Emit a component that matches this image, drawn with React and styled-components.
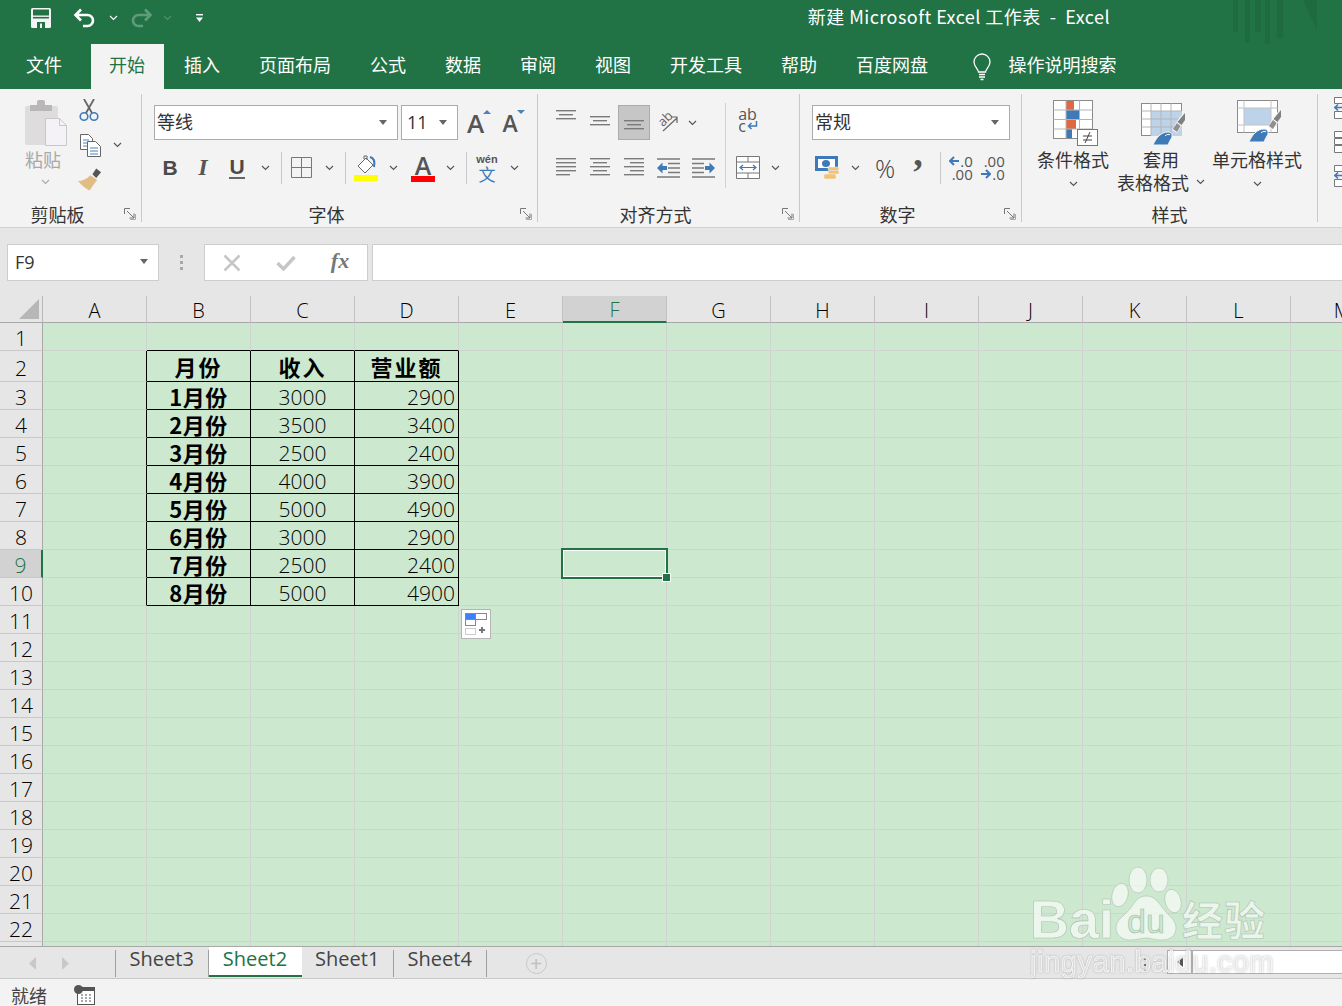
import React from "react";
import styled, { createGlobalStyle } from "styled-components";

const GREEN = "#217346";
const COLS = ["A", "B", "C", "D", "E", "F", "G", "H", "I", "J", "K", "L", "M"];
const MENU = ["开始", "插入", "页面布局", "公式", "数据", "审阅", "视图", "开发工具", "帮助", "百度网盘"];
const DATA = [
  ["1月份", 3000, 2900],
  ["2月份", 3500, 3400],
  ["3月份", 2500, 2400],
  ["4月份", 4000, 3900],
  ["5月份", 5000, 4900],
  ["6月份", 3000, 2900],
  ["7月份", 2500, 2400],
  ["8月份", 5000, 4900],
];

const Chevron = ({ color = "#555" }) => (
  <svg width="9" height="6" viewBox="0 0 9 6">
    <path d="M1 1l3.5 3.5L8 1" fill="none" stroke={color} strokeWidth="1.2" />
  </svg>
);

const ComboArrow = () => (
  <svg width="8" height="5" viewBox="0 0 8 5">
    <path d="M0 0h8L4 5z" fill="#666" />
  </svg>
);

const Launcher = () => (
  <svg width="12" height="12" viewBox="0 0 12 12">
    <path d="M.5 6V.5H6M3 3l7 7M10 5.5V10H5.5" fill="none" stroke="#777" strokeWidth="1" />
    <path d="M11.5 6v5.5H6" fill="none" stroke="#aaa" strokeWidth="1" />
  </svg>
);

// alignment glyphs are just stacks of grey lines
const Lines = ({ rows, width = 20, height = 20, gap = 4, align = "left" }) => (
  <svg width={width} height={height} viewBox={`0 0 ${width} ${height}`}>
    {rows.map((w, i) => {
      const x = align === "left" ? 0 : align === "center" ? (width - w) / 2 : width - w;
      return <rect key={i} x={x} y={i * gap} width={w} height="1.4" fill="#7a7a7a" />;
    })}
  </svg>
);

const SaveIcon = () => (
  <svg width="20" height="20" viewBox="0 0 20 20">
    <rect x="0" y="0" width="20" height="20" rx="1.5" fill="#f4f4f4" />
    <rect x="2" y="1.5" width="16" height="9" fill={GREEN} />
    <rect x="2" y="7.5" width="16" height="1.4" fill="#f4f4f4" />
    <rect x="6" y="14" width="8" height="6" fill={GREEN} />
    <rect x="9" y="15.5" width="2" height="4.5" fill="#f4f4f4" />
  </svg>
);

const ArrowBack = ({ color, flip }) => (
  <svg width="23" height="20" viewBox="0 0 23 20" style={flip ? { transform: "scaleX(-1)" } : undefined}>
    <path d="M8 1.5L2.5 7 8 12.5M3 7h11.5a5.5 5.5 0 0 1 0 11H10" fill="none" stroke={color} strokeWidth="2.6" />
  </svg>
);

const Customize = () => (
  <svg width="7" height="8" viewBox="0 0 7 8">
    <rect x="0" y="0" width="7" height="1.4" fill="#fff" />
    <path d="M0 3.5h7L3.5 8z" fill="#fff" />
  </svg>
);

const Bars = () => (
  <svg width="110" height="60" viewBox="0 0 110 60">
    <g fill="#1f6a41">
      <rect x="0" width="5" height="32" />
      <rect x="12" width="5" height="43" />
      <rect x="22" width="6" height="32" />
      <rect x="32" width="5" height="56" />
      <rect x="44" width="6" height="38" />
      <path d="M70 0h14v30zM100 44c2 4 5 8 10 10v-10z" />
    </g>
  </svg>
);

const Bulb = () => (
  <svg width="20" height="28" viewBox="0 0 20 28">
    <path d="M6.5 19c0-3-4.5-5-4.5-10a8 8 0 0 1 16 0c0 5-4.5 7-4.5 10z" fill="none" stroke="#fff" strokeWidth="1.3" />
    <path d="M7 21.5h6M7 24h6" stroke="#fff" strokeWidth="1.5" />
    <path d="M8.5 26.5h3" stroke="#fff" strokeWidth="1.5" />
  </svg>
);

const PasteIcon = () => (
  <svg width="43" height="50" viewBox="0 0 43 50">
    <rect x="1" y="6" width="33" height="39" rx="2" fill="#dedcdd" />
    <rect x="6" y="5" width="22" height="6" fill="#b9b7b8" />
    <rect x="13" y="0" width="8" height="7" rx="2" fill="#b9b7b8" />
    <path d="M21.5 18.5h14l7 7v20h-21z" fill="#f4f2f6" stroke="#c9c7c9" />
    <path d="M35.5 18.5v7h7" fill="none" stroke="#c9c7c9" />
  </svg>
);

const CutIcon = () => (
  <svg width="20" height="23" viewBox="0 0 20 23">
    <path d="M5 0l8 14M15 0L7 14" stroke="#666" strokeWidth="1.8" fill="none" />
    <circle cx="5" cy="17.5" r="3.8" fill="none" stroke="#3f7ab8" strokeWidth="1.6" />
    <circle cx="15" cy="17.5" r="3.8" fill="none" stroke="#3f7ab8" strokeWidth="1.6" />
  </svg>
);

const CopyIcon = () => (
  <svg width="21" height="23" viewBox="0 0 21 23">
    <path d="M.5.5h8l4 4v11H.5z" fill="#fff" stroke="#666" />
    <path d="M3 6h6M3 9h7M3 12h7" stroke="#4a82bd" />
    <path d="M7.5 7.5h8l5 5v10h-13z" fill="#fff" stroke="#666" />
    <path d="M10 14h8M10 17h8M10 20h8" stroke="#4a82bd" />
  </svg>
);

const PainterIcon = () => (
  <svg width="25" height="23" viewBox="0 0 25 23">
    <path d="M15 6l4-6 5 4-5 6z" fill="#555" />
    <path d="M13 7l7 5-3 4-5 7C8 21 3 17 0 13c5 0 9-2 13-6z" fill="#e2bd83" />
  </svg>
);

const SizeA = ({ size, up }) => (
  <SizeLetter $size={size}>
    A
    <SizeCaret $up={up} />
  </SizeLetter>
);

const BorderIcon = () => (
  <svg width="21" height="21" viewBox="0 0 21 21">
    <path d="M.5.5h20v20H.5zM10.5.5v20M.5 10.5h20" fill="none" stroke="#777" />
  </svg>
);

const FillIcon = () => (
  <svg width="25" height="26" viewBox="0 0 25 26">
    <path d="M4 11l8-8 7 7-8 8z" fill="#fff" stroke="#666" />
    <path d="M10 4V1h3v4" fill="none" stroke="#666" />
    <path d="M16 2c4 1 5 5 4 10" fill="none" stroke="#3f7ab8" strokeWidth="2" />
    <rect x="0" y="20" width="24" height="6" fill="#ffff00" />
  </svg>
);

const OrientIcon = () => (
  <svg width="21" height="21" viewBox="0 0 21 21" overflow="visible">
    <text x="1" y="12" fontSize="13" fontFamily="Open Sans" fill="#666" transform="rotate(-45 7 9)">ab</text>
    <path d="M5 19L19 6M13 5h6v6" fill="none" stroke="#666" strokeWidth="1.2" />
  </svg>
);

const WrapIcon = () => (
  <svg width="11" height="10" viewBox="0 0 11 10">
    <path d="M9.5 0v5H2M4.5 2L1.5 5l3 3" fill="none" stroke="#3f7ab8" strokeWidth="1.5" />
  </svg>
);

const IndentIcon = ({ flip }) => (
  <svg width="23" height="20" viewBox="0 0 23 20" style={flip ? { transform: "scaleX(-1)" } : undefined}>
    <path d="M0 1h23M11 5.5h12M11 10h12M11 14.5h12M0 19h23" stroke="#7a7a7a" strokeWidth="1.3" />
    <path d="M0 10l5.5-5.5v3.5H10v4H5.500v3.500z" fill="#3f7ab8" />
  </svg>
);

const MergeIcon = () => (
  <svg width="24" height="23" viewBox="0 0 24 23">
    <path d="M.5.5h23v22H.5zM.5 6h23M.5 17h23M12 .5V6M12 17v5.500" fill="#fff" stroke="#777" />
    <path d="M4 11.500h16M7 9L4 11.500 7 14M17 9l3 2.500-3 2.500" fill="none" stroke="#3f7ab8" strokeWidth="1.2" />
  </svg>
);

const CurrencyIcon = () => (
  <svg width="25" height="25" viewBox="0 0 25 25">
    <rect x="0" y="1" width="23" height="15" fill="#3f7ab8" />
    <rect x="3" y="4" width="17" height="9" fill="#fff" />
    <ellipse cx="11" cy="8.500" rx="4" ry="3.500" fill="#3f7ab8" />
    <rect x="13" y="12" width="11" height="3.500" rx="1.500" fill="#f2c27a" stroke="#f3f3f3" strokeWidth=".5" />
    <rect x="13" y="15.500" width="11" height="3.500" rx="1.500" fill="#f2c27a" stroke="#f3f3f3" strokeWidth=".5" />
    <rect x="9" y="19" width="12" height="5" rx="1.500" fill="#f2c27a" stroke="#f3f3f3" strokeWidth=".5" />
  </svg>
);

const BlueArrow = ({ left }) => (
  <svg width="10" height="10" viewBox="0 0 10 10">
    <path d={left ? "M5 1L1 5l4 4M1 5h9" : "M5 1l4 4-4 4M9 5H0"} fill="none" stroke="#3f7ab8" strokeWidth="2" />
  </svg>
);

const CondIcon = () => (
  <svg width="46" height="46" viewBox="0 0 46 46">
    <rect x=".5" y=".5" width="39" height="38" fill="#fff" stroke="#8a8a8a" />
    <rect x="13" y="1" width="8" height="9" fill="#e0673f" />
    <rect x="13" y="10" width="13" height="9" fill="#3f7ab8" />
    <rect x="13" y="19" width="10" height="10" fill="#e0673f" />
    <rect x="13" y="29" width="6" height="9" fill="#3f7ab8" />
    <path d="M13 .5v38M26.500.5v38M.5 10h39M.5 19.500h39M.5 29h39" fill="none" stroke="#b5b5b5" />
    <rect x="24.500" y="29.500" width="20" height="16" fill="#fff" stroke="#777" />
    <path d="M30 36h9M30 40h9M37 32l-5 11" stroke="#444" fill="none" />
  </svg>
);

// paint brush laid over the two style icons
const Brush = () => (
  <g>
    <path d="M44 9v9L36 30l-5-3 7-12z" fill="#f3f3f3" />
    <path d="M44 10v7l-3.500 5-4-3z" fill="#7f7f7f" />
    <path d="M36 20l3.500 3-3.500 6-4-3z" fill="#8f8f8f" />
    <path d="M12 42c3-7 8-13 15-13 4 0 5 4 3 7-2 3-3 6-3 6z" fill="#3f7ab8" stroke="#f3f3f3" />
    <path d="M24 33c2-2 4-2 5-1" fill="none" stroke="#fff" />
  </g>
);

const TableIcon = () => (
  <svg width="46" height="42" viewBox="0 0 46 42">
    <rect x=".5" y=".5" width="40" height="32" fill="#fff" stroke="#8a8a8a" />
    <rect x="10" y="8" width="31" height="25" fill="#bcd3ea" />
    <path d="M10 .5v32M20 .5v32M30 .5v32M.5 8h40M.5 16h40M.5 24h40" fill="none" stroke="#b5b5b5" />
    <Brush />
  </svg>
);

const CellStyleIcon = () => (
  <svg width="46" height="46" viewBox="0 0 46 46">
    <rect x=".5" y=".5" width="40" height="32" fill="#fff" stroke="#8a8a8a" />
    <rect x="7" y="8" width="27" height="17" fill="#bcd3ea" />
    <path d="M7 .5v32M34 .5v32M.5 8h40M.5 25h40" fill="none" stroke="#c2c2c2" />
    <Brush />
  </svg>
);

const CellsIcon = ({ blue }) => (
  <svg width="22" height="22" viewBox="0 0 22 22">
    <path d="M.5.5h8v6h-8zM.5 14.500h8v7h-8z" fill="#fff" stroke="#777" />
    {blue && <path d="M0 10.500h9M4 7.500l-3 3 3 3" fill="none" stroke="#3f7ab8" strokeWidth="1.6" />}
    {!blue && <path d="M.5 7.500h8v6h-8z" fill="#fff" stroke="#777" />}
  </svg>
);

const CrossIcon = () => (
  <svg width="18" height="18" viewBox="0 0 18 18">
    <path d="M1.500 1.500l15 15M16.500 1.500l-15 15" stroke="#c6c6c6" strokeWidth="2.6" />
  </svg>
);

const CheckIcon = () => (
  <svg width="20" height="16" viewBox="0 0 20 16">
    <path d="M1.500 8l6 6L18.500 2" fill="none" stroke="#c6c6c6" strokeWidth="3.4" />
  </svg>
);

const PasteOptionsIcon = () => (
  <svg width="22" height="22" viewBox="0 0 22 22">
    <rect x=".5" y=".5" width="21" height="6" fill="#fff" stroke="#888" />
    <rect x=".5" y=".5" width="10" height="6" fill="#3c82f6" stroke="#888" />
    <rect x=".5" y="6.500" width="10" height="6" fill="#fff" stroke="#888" />
    <rect x=".5" y="15.500" width="10" height="6" fill="none" stroke="#999" strokeDasharray="1 1" />
    <path d="M17 14v6M14 17h6" stroke="#777" strokeWidth="2" />
  </svg>
);

const StatusSheetIcon = () => (
  <svg width="21" height="20" viewBox="0 0 21 20">
    <rect x="3.500" y="2.500" width="17" height="17" fill="#fff" stroke="#555" />
    <rect x="3" y="2" width="18" height="4" fill="#555" />
    <path d="M7 10h2M11 10h2M15 10h2M7 13h2M11 13h2M15 13h2M7 16h2M11 16h2M15 16h2" stroke="#555" />
    <circle cx="4.500" cy="4.500" r="4.500" fill="#555" />
  </svg>
);

const NavArrow = ({ left }) => (
  <svg width="7" height="13" viewBox="0 0 7 13">
    <path d={left ? "M7 0v13L0 6.500z" : "M0 0v13l7-6.500z"} fill="#c8c8c8" />
  </svg>
);

const Watermark = () => (
  <WatermarkBox width="245" height="125" viewBox="0 0 245 125">
    <g fill="#fff" fillOpacity=".62" stroke="#aebfb0" strokeWidth=".6">
      <ellipse cx="90" cy="35" rx="8" ry="12" transform="rotate(15 90 35)" />
      <ellipse cx="108" cy="20" rx="9" ry="13" />
      <ellipse cx="129" cy="20" rx="9" ry="12" />
      <ellipse cx="143" cy="41" rx="8" ry="12" transform="rotate(-15 143 41)" />
      <path d="M116 36c10 0 13 8 20 16 6 6 10 10 10 16 0 8-6 12-14 12-8 0-11-2-16-2s-9 2-16 2c-8 0-14-5-14-12 0-8 8-12 13-18 6-7 8-14 17-14z" />
      <text x="0" y="78" fontFamily="Liberation Sans" fontWeight="700" fontSize="54">Bai</text>
      <text x="152" y="76" fontFamily="Noto Sans CJK SC" fontWeight="700" fontSize="41" letterSpacing="1">经验</text>
    </g>
    <text x="116" y="73" textAnchor="middle" fontFamily="Liberation Sans" fontSize="34" fill="#cce8cf" stroke="#9fbda6" strokeWidth=".6">du</text>
    <JingyanText x="0" y="112" fontFamily="Liberation Sans" fontSize="29" letterSpacing=".6">jingyan.baidu.com</JingyanText>
  </WatermarkBox>
);

const App = () => {
  const rows = Array.from({ length: 23 }, (_, i) => i + 1);

  // what sits in each sheet cell of the small table
  const cellContent = (r, c) => {
    if (r === 2) return { B: "月份", C: "收入", D: "营业额" }[c];
    const row = DATA[r - 3];
    if (!row) return null;
    return { B: row[0], C: row[1], D: row[2] }[c];
  };

  return (
    <Page>
      <GlobalStyle />
      <TitleBar>
        <QuickSlot $w={31} />
        <QuickSlot $w={20}><SaveIcon /></QuickSlot>
        <QuickSlot $w={22} />
        <QuickSlot $w={23}><ArrowBack color="#fff" /></QuickSlot>
        <QuickSlot $w={34}><Chevron color="#fff" /></QuickSlot>
        <QuickSlot $w={23}><ArrowBack color="#5f9c7c" flip /></QuickSlot>
        <QuickSlot $w={28}><Chevron color="#4d9070" /></QuickSlot>
        <QuickSlot $w={36}><Customize /></QuickSlot>
        <WindowTitle>新建 Microsoft Excel 工作表&nbsp; - &nbsp;Excel</WindowTitle>
        <BarsWrap><Bars /></BarsWrap>
      </TitleBar>

      <MenuBar>
        <MenuTab $file>文件</MenuTab>
        {MENU.map((m) => (
          <MenuTab key={m} $active={m === "开始"}>{m}</MenuTab>
        ))}
        <BulbSlot><Bulb /></BulbSlot>
        <SearchText>操作说明搜索</SearchText>
      </MenuBar>

      <Ribbon>
        <Group $w={142}>
          <GroupBody>
            <PasteCol>
              <PasteIcon />
              <PasteLabel>粘贴</PasteLabel>
              <PasteChevron><Chevron color="#aaa" /></PasteChevron>
            </PasteCol>
            <SmallCol>
              <SmallRow $top={5}><Slot $w={22}><CutIcon /></Slot></SmallRow>
              <SmallRow $top={13}>
                <Slot $w={24}><CopyIcon /></Slot>
                <Slot $w={30}><Chevron /></Slot>
              </SmallRow>
              <SmallRow $top={12}><Slot $w={24}><PainterIcon /></Slot></SmallRow>
            </SmallCol>
          </GroupBody>
          <GroupFooter $launcher>剪贴板<LauncherSlot><Launcher /></LauncherSlot></GroupFooter>
        </Group>

        <Group $w={396}>
          <GroupStack $left={12}>
            <ToolRow>
              <Combo $w={244}><ComboText>等线</ComboText><ComboArrow /></Combo>
              <Combo $w={57} $gap={3}><ComboText $latin>11</ComboText><ComboArrow /></Combo>
              <Slot $w={35}><SizeA size={26} up /></Slot>
              <Slot $w={34}><SizeA size={23} /></Slot>
            </ToolRow>
            <ToolRow $second>
              <Slot $w={32}><StyleLetter>B</StyleLetter></Slot>
              <Slot $w={34}><ItalicLetter>I</ItalicLetter></Slot>
              <Slot $w={34}><StyleLetter $underline>U</StyleLetter></Slot>
              <Slot $w={22}><Chevron /></Slot>
              <Slot $w={10}><ToolDivider /></Slot>
              <Slot $w={31}><BorderIcon /></Slot>
              <Slot $w={24}><Chevron /></Slot>
              <Slot $w={8}><ToolDivider /></Slot>
              <Slot $w={34}><FillIcon /></Slot>
              <Slot $w={20}><Chevron /></Slot>
              <Slot $w={40}><FontColor>A</FontColor></Slot>
              <Slot $w={14}><Chevron /></Slot>
              <Slot $w={18}><ToolDivider /></Slot>
              <Slot $w={24}><WenBox><WenTop>wén</WenTop><WenChar>文</WenChar></WenBox></Slot>
              <Slot $w={30}><Chevron /></Slot>
            </ToolRow>
          </GroupStack>
          <GroupFooter $launcher>字体<LauncherSlot><Launcher /></LauncherSlot></GroupFooter>
        </Group>

        <Group $w={262}>
          <GroupBody>
            <AlignLeft>
              <ToolRow>
                <Slot $w={34}><Lines rows={[20, 14, 20]} gap={4} height={26} align="center" /></Slot>
                <Slot $w={34}><Lines rows={[20, 14, 20]} gap={4} height={14} align="center" /></Slot>
                <SelectedTool><Lines rows={[20, 14, 20]} gap={4} height={10} align="center" /></SelectedTool>
                <Slot $w={36}><OrientIcon /></Slot>
                <Slot $w={12}><Chevron /></Slot>
              </ToolRow>
              <ToolRow $second>
                <Slot $w={34}><Lines rows={[20, 20, 20, 20, 14]} /></Slot>
                <Slot $w={34}><Lines rows={[20, 14, 20, 14, 20]} align="center" /></Slot>
                <Slot $w={34}><Lines rows={[20, 14, 20, 14, 20]} align="right" /></Slot>
                <Slot $w={35}><IndentIcon /></Slot>
                <Slot $w={34}><IndentIcon flip /></Slot>
              </ToolRow>
            </AlignLeft>
            <AlignDivider />
            <AlignRight>
              <ToolRow>
                <Slot $w={44}><WrapBox>ab<WrapLine>c<WrapIcon /></WrapLine></WrapBox></Slot>
              </ToolRow>
              <MergeRow>
                <Slot $w={44}><MergeIcon /></Slot>
                <Slot $w={10}><Chevron /></Slot>
              </MergeRow>
            </AlignRight>
          </GroupBody>
          <GroupFooter $launcher>对齐方式<LauncherSlot><Launcher /></LauncherSlot></GroupFooter>
        </Group>

        <Group $w={222}>
          <GroupStack $left={12}>
            <ToolRow>
              <Combo $w={198}><ComboText>常规</ComboText><ComboArrow /></Combo>
            </ToolRow>
            <ToolRow $second>
              <Slot $w={30}><CurrencyIcon /></Slot>
              <Slot $w={26}><Chevron /></Slot>
              <Slot $w={34}><Percent>%</Percent></Slot>
              <Slot $w={32}><Comma>,</Comma></Slot>
              <Slot $w={12}><ToolDivider /></Slot>
              <Slot $w={30}>
                <Decimal>
                  <DecimalLine><BlueArrow left />.0</DecimalLine>
                  <DecimalLine>.00</DecimalLine>
                </Decimal>
              </Slot>
              <Slot $w={34}>
                <Decimal>
                  <DecimalLine>.00</DecimalLine>
                  <DecimalLine><BlueArrow />.0</DecimalLine>
                </Decimal>
              </Slot>
            </ToolRow>
          </GroupStack>
          <GroupFooter $launcher>数字<LauncherSlot><Launcher /></LauncherSlot></GroupFooter>
        </Group>

        <Group $w={296}>
          <GroupBody $left={8}>
            <StyleCol $w={86}>
              <StyleIconBox><CondIcon /></StyleIconBox>
              <StyleLine>条件格式</StyleLine>
              <StyleLine $chevron><Chevron /></StyleLine>
            </StyleCol>
            <StyleCol $w={90}>
              <StyleIconBox $low><TableIcon /></StyleIconBox>
              <StyleLine>套用</StyleLine>
              <StyleLine>表格格式<InlineChevron><Chevron /></InlineChevron></StyleLine>
            </StyleCol>
            <StyleCol $w={102}>
              <StyleIconBox><CellStyleIcon /></StyleIconBox>
              <StyleLine>单元格样式</StyleLine>
              <StyleLine $chevron><Chevron /></StyleLine>
            </StyleCol>
          </GroupBody>
          <GroupFooter>样式</GroupFooter>
        </Group>

        <CellsGroup>
          <CellsIcon blue />
          <CellsIcon />
          <CellsIcon blue />
        </CellsGroup>
      </Ribbon>

      <FormulaBar>
        <NameBox>F9<ComboArrow /></NameBox>
        <GripDots>
          <i /><i /><i />
        </GripDots>
        <FormulaButtons>
          <Slot $w={54}><CrossIcon /></Slot>
          <Slot $w={54}><CheckIcon /></Slot>
          <Slot $w={54}><FxText>fx</FxText></Slot>
        </FormulaButtons>
        <FormulaInput />
      </FormulaBar>

      <Sheet>
        <Corner><CornerMark /></Corner>
        {COLS.map((c) => (
          <ColHeader key={c} $active={c === "F"}>{c}</ColHeader>
        ))}
        {rows.map((r) => (
          <React.Fragment key={r}>
            <RowHeader $active={r === 9}>{r < 23 ? r : ""}</RowHeader>
            {COLS.map((c) => {
              const inTable = r >= 2 && r <= 10 && "BCD".includes(c);
              return (
                <Cell
                  key={c}
                  $right={inTable || (c === "A" && r >= 2 && r <= 10)}
                  $bottom={inTable || (r === 1 && "BCD".includes(c))}
                  $kind={inTable ? (r === 2 ? "head" : c === "B" ? "label" : c === "D" ? "num" : "center") : undefined}
                >
                  {inTable && cellContent(r, c)}
                  {r === 9 && c === "F" && (
                    <Selection>
                      <Handle />
                    </Selection>
                  )}
                </Cell>
              );
            })}
          </React.Fragment>
        ))}
        <PasteOptions><PasteOptionsIcon /></PasteOptions>
      </Sheet>

      <TabBar>
        <TabNav>
          <NavArrow left />
          <NavArrow />
        </TabNav>
        <SheetTab>Sheet3</SheetTab>
        <SheetTab $active>Sheet2</SheetTab>
        <SheetTab>Sheet1</SheetTab>
        <SheetTab $divider>Sheet4</SheetTab>
        <AddSheet>+</AddSheet>
        <SplitDots>⋮</SplitDots>
        <ScrollTrack>
          <ScrollArrow>
            <svg width="6" height="10" viewBox="0 0 6 10"><path d="M6 0v10L0 5z" fill="#555" /></svg>
          </ScrollArrow>
        </ScrollTrack>
      </TabBar>

      <StatusBar>
        <StatusText>就绪</StatusText>
        <StatusSheetIcon />
      </StatusBar>

      <Watermark />
    </Page>
  );
};

export default App;

const GlobalStyle = createGlobalStyle`
  html, body {
    margin: 0;
    padding: 0;
    background: #f3f3f3;
  }
  body {
    font-family: "Noto Sans CJK SC", "Liberation Sans", sans-serif;
    color: #333;
  }
`;

const Page = styled.div`
  position: relative;
  width: 1342px;
  height: 1006px;
  overflow: hidden;
`;

const TitleBar = styled.div`
  position: relative;
  height: 44px;
  background: ${GREEN};
  display: flex;
  align-items: center;
  overflow: hidden;
`;

const QuickSlot = styled.div`
  width: ${(p) => p.$w}px;
  display: flex;
  justify-content: center;
  align-items: center;
  margin-top: -8px;
`;

const WindowTitle = styled.div`
  margin-left: auto;
  margin-right: 232px;
  margin-top: -12px;
  font-size: 18px;
  letter-spacing: 0.45px;
  color: #fff;
  white-space: nowrap;
`;

const BarsWrap = styled.div`
  position: absolute;
  left: 1233px;
  top: 0;
`;

const MenuBar = styled.div`
  height: 45px;
  background: ${GREEN};
  display: flex;
  align-items: stretch;
  gap: 2px;
  padding-left: 7.5px;
`;

const MenuTab = styled.div`
  padding: 0 18.5px 5px;
  margin-right: ${(p) => (p.$file ? 8 : 0)}px;
  display: flex;
  align-items: center;
  font-size: 18px;
  color: ${(p) => (p.$active ? GREEN : "#fff")};
  background: ${(p) => (p.$active ? "#f3f3f3" : "transparent")};
`;

const BulbSlot = styled.div`
  width: 20px;
  margin-left: 23px;
  display: flex;
  align-items: center;
`;

const SearchText = styled.div`
  margin-left: 15px;
  padding-bottom: 5px;
  display: flex;
  align-items: center;
  font-size: 18px;
  color: #fff;
`;

const Ribbon = styled.div`
  height: 139px;
  box-sizing: border-box;
  padding-top: 5px;
  background: #f3f3f3;
  border-bottom: 1px solid #d2d2d2;
  display: flex;
  align-items: flex-start;
  overflow: hidden;
`;

const Group = styled.div`
  position: relative;
  box-sizing: border-box;
  width: ${(p) => p.$w}px;
  height: 128px;
  flex-shrink: 0;
  border-right: 1px solid #c8c8c8;
  display: flex;
  flex-direction: column;
`;

const GroupBody = styled.div`
  flex: 1;
  display: flex;
  padding-left: ${(p) => p.$left || 0}px;
`;

const GroupStack = styled.div`
  flex: 1;
  display: flex;
  flex-direction: column;
  padding-left: ${(p) => p.$left || 0}px;
  padding-top: 11px;
`;

const GroupFooter = styled.div`
  position: relative;
  height: 20px;
  margin-bottom: -2px;
  padding-right: ${(p) => (p.$launcher ? 26 : 0)}px;
  display: flex;
  justify-content: center;
  align-items: center;
  font-size: 18px;
  line-height: 20px;
  color: #333;
`;

const LauncherSlot = styled.div`
  position: absolute;
  right: 5px;
  top: 4px;
  height: 12px;
  display: flex;
`;

const Slot = styled.div`
  width: ${(p) => p.$w}px;
  flex-shrink: 0;
  height: 100%;
  display: flex;
  justify-content: center;
  align-items: center;
`;

const PasteCol = styled.div`
  width: 66px;
  margin-left: 12px;
  padding-top: 6px;
  display: flex;
  flex-direction: column;
  align-items: center;
`;

const PasteLabel = styled.div`
  margin: -1px 4px 1px 0;
  font-size: 18px;
  line-height: 20px;
  color: #a8a8a8;
`;

const PasteChevron = styled.div`
  margin-top: 9px;
  display: flex;
`;

const SmallCol = styled.div`
  display: flex;
  flex-direction: column;
`;

const SmallRow = styled.div`
  height: 22px;
  margin-top: ${(p) => p.$top}px;
  display: flex;
`;

const ToolRow = styled.div`
  height: 35px;
  margin-top: ${(p) => (p.$second ? 10 : 0)}px;
  display: flex;
  align-items: center;
`;

const MergeRow = styled(ToolRow)`
  margin-top: 13px;
`;

const Combo = styled.div`
  box-sizing: border-box;
  width: ${(p) => p.$w}px;
  height: 35px;
  margin-left: ${(p) => p.$gap || 0}px;
  padding: 0 10px 0 2px;
  flex-shrink: 0;
  background: #fff;
  border: 1px solid #ababab;
  display: flex;
  justify-content: space-between;
  align-items: center;
`;

const ComboText = styled.span`
  font-size: 18px;
  margin-top: ${(p) => (p.$latin ? -2 : -4)}px;
  padding-left: ${(p) => (p.$latin ? 3 : 0)}px;
  color: #333;
  font-family: ${(p) => (p.$latin ? '"Open Sans", sans-serif' : "inherit")};
`;

const SizeLetter = styled.span`
  position: relative;
  font-family: "Open Sans", sans-serif;
  font-weight: 600;
  font-size: ${(p) => p.$size}px;
  line-height: 30px;
  color: #555;
`;

const SizeCaret = styled.i`
  position: absolute;
  right: -7px;
  top: 2px;
  width: 0;
  height: 0;
  border-left: 4px solid transparent;
  border-right: 4px solid transparent;
  border-${(p) => (p.$up ? "bottom" : "top")}: 4px solid #4a82bd;
`;

const StyleLetter = styled.span`
  font-family: "Liberation Sans", sans-serif;
  font-size: 21px;
  font-weight: 700;
  border-bottom: ${(p) => (p.$underline ? "2px solid #666" : "0")};
  line-height: 21px;
  color: #4a4a4a;
`;

const ItalicLetter = styled.span`
  font-family: "Liberation Serif", serif;
  font-size: 24px;
  font-weight: 700;
  font-style: italic;
  line-height: 21px;
  color: #555;
`;

const ToolDivider = styled.div`
  width: 1px;
  height: 32px;
  background: #c8c8c8;
`;

const FontColor = styled.div`
  width: 24px;
  text-align: center;
  font-family: "Open Sans", sans-serif;
  font-size: 25px;
  font-weight: 600;
  line-height: 22px;
  color: #555;
  border-bottom: 6px solid #ff0000;
`;

const WenBox = styled.div`
  display: flex;
  flex-direction: column;
  align-items: center;
  line-height: 1;
`;

const WenTop = styled.span`
  font-family: "Liberation Sans", sans-serif;
  font-size: 11px;
  font-weight: 700;
  color: #555;
`;

const WenChar = styled.span`
  font-size: 17px;
  color: #3f7ab8;
  line-height: 17px;
`;

const AlignLeft = styled.div`
  width: 176px;
  margin-left: 11px;
  padding-top: 11px;
`;

const SelectedTool = styled.div`
  box-sizing: border-box;
  width: 32px;
  height: 35px;
  margin-left: 1px;
  padding-top: 14px;
  flex-shrink: 0;
  background: #c6c6c6;
  border: 1px solid #ababab;
  display: flex;
  justify-content: center;
`;

const AlignDivider = styled.div`
  width: 1px;
  height: 85px;
  margin-top: 9px;
  background: #d2d2d2;
`;

const AlignRight = styled.div`
  padding-top: 8px;
`;

const WrapBox = styled.div`
  font-family: "Open Sans", sans-serif;
  font-size: 16px;
  line-height: 12px;
  color: #555;
`;

const WrapLine = styled.div`
  display: flex;
  align-items: center;
  gap: 1px;
`;

const Percent = styled.span`
  font-family: "Open Sans", sans-serif;
  font-weight: 300;
  font-size: 25px;
  color: #444;
`;

const Comma = styled.span`
  font-family: "Liberation Serif", serif;
  font-size: 38px;
  font-weight: 700;
  line-height: 20px;
  margin-top: -30px;
  color: #555;
`;

const Decimal = styled.div`
  display: flex;
  flex-direction: column;
  align-items: flex-end;
  font-family: "Open Sans", sans-serif;
  font-size: 15px;
  line-height: 12.5px;
  color: #555;
`;

const DecimalLine = styled.div`
  display: flex;
  align-items: center;
  gap: 1px;
`;

const StyleCol = styled.div`
  width: ${(p) => p.$w}px;
  padding-top: 6px;
  display: flex;
  flex-direction: column;
  align-items: center;
`;

const StyleIconBox = styled.div`
  height: 49px;
  padding-top: ${(p) => (p.$low ? 3 : 0)}px;
  box-sizing: border-box;
  margin-left: 5px;
  display: flex;
`;

const StyleLine = styled.div`
  height: 23px;
  padding-bottom: ${(p) => (p.$chevron ? 0 : 4)}px;
  box-sizing: border-box;
  display: flex;
  align-items: center;
  font-size: 18px;
  white-space: nowrap;
  color: #333;
`;

const InlineChevron = styled.span`
  margin-left: 7px;
  display: flex;
`;

const CellsGroup = styled.div`
  padding: 3px 0 0 16px;
  display: flex;
  flex-direction: column;
  gap: 12px;
`;

const FormulaBar = styled.div`
  height: 68px;
  box-sizing: border-box;
  padding: 16px 0 15px 7px;
  background: #e6e6e6;
  display: flex;
`;

const NameBox = styled.div`
  box-sizing: border-box;
  width: 152px;
  padding: 0 10px 2px 7px;
  background: #fff;
  border: 1px solid #cdcdcd;
  font-family: "Open Sans", sans-serif;
  font-size: 18px;
  color: #333;
  display: flex;
  justify-content: space-between;
  align-items: center;
`;

const GripDots = styled.div`
  width: 45px;
  display: flex;
  flex-direction: column;
  justify-content: center;
  align-items: center;
  gap: 3px;

  i {
    display: block;
    width: 3px;
    height: 3px;
    background: #a8a8a8;
  }
`;

const FormulaButtons = styled.div`
  box-sizing: border-box;
  width: 164px;
  background: #fff;
  border: 1px solid #cdcdcd;
  display: flex;
`;

const FxText = styled.span`
  font-family: "Liberation Serif", serif;
  font-style: italic;
  font-weight: 700;
  font-size: 22px;
  margin-top: -4px;
  color: #777;
`;

const FormulaInput = styled.div`
  flex: 1;
  margin-left: 4px;
  background: #fff;
  border: 1px solid #cdcdcd;
  border-right: 0;
`;

const Sheet = styled.div`
  position: relative;
  height: 650px;
  overflow: hidden;
  display: grid;
  grid-template-columns: 43px repeat(13, 104px);
  grid-template-rows: 27px 28px 31px repeat(21, 28px);
  background: #cce8cf;
`;

const Corner = styled.div`
  background: #e6e6e6;
  border-right: 1px solid #b8b8b8;
  border-bottom: 1px solid #a8a8a8;
  box-sizing: border-box;
  display: flex;
  justify-content: flex-end;
  align-items: flex-end;
  padding: 0 3px 3px 0;
`;

const CornerMark = styled.div`
  width: 0;
  height: 0;
  border-left: 20px solid transparent;
  border-bottom: 20px solid #b7b7b7;
`;

const ColHeader = styled.div`
  box-sizing: border-box;
  padding-top: 3px;
  background: ${(p) => (p.$active ? "#d2d2d2" : "#e6e6e6")};
  border-right: 1px solid #c2c2c2;
  border-bottom: ${(p) => (p.$active ? `2px solid ${GREEN}` : "1px solid #a8a8a8")};
  display: flex;
  justify-content: center;
  align-items: center;
  font-family: "Open Sans", sans-serif;
  font-weight: 300;
  font-size: 20px;
  line-height: 1;
  color: ${(p) => (p.$active ? GREEN : "#000")};
`;

const RowHeader = styled.div`
  box-sizing: border-box;
  padding-top: 4px;
  background: ${(p) => (p.$active ? "#d2d2d2" : "#e6e6e6")};
  border-right: ${(p) => (p.$active ? `2px solid ${GREEN}` : "1px solid #a8a8a8")};
  border-bottom: 1px solid #c8c8c8;
  display: flex;
  justify-content: center;
  align-items: center;
  font-family: "Open Sans", sans-serif;
  font-weight: 300;
  font-size: 21px;
  line-height: 1;
  color: ${(p) => (p.$active ? GREEN : "#000")};
`;

const Cell = styled.div`
  position: relative;
  box-sizing: border-box;
  border-right: 1px solid ${(p) => (p.$right ? "#000" : "#d0d4d0")};
  border-bottom: 1px solid ${(p) => (p.$bottom ? "#000" : "#d0d4d0")};
  display: flex;
  align-items: center;
  justify-content: ${(p) => (p.$kind === "num" ? "flex-end" : "center")};
  padding-right: ${(p) => (p.$kind === "num" ? 3 : 0)}px;
  padding-top: ${(p) => (p.$kind === "num" || p.$kind === "center" ? 4 : 0)}px;
  font-size: ${(p) => (p.$kind === "head" || p.$kind === "label" ? 22 : 21)}px;
  font-weight: ${(p) => (p.$kind === "head" || p.$kind === "label" ? 700 : 300)};
  letter-spacing: ${(p) => (p.$kind === "head" ? 2 : p.$kind === "label" ? 0.5 : 0)}px;
  font-family: ${(p) =>
    p.$kind === "num" || p.$kind === "center"
      ? '"Open Sans", sans-serif'
      : '"Noto Sans CJK SC", sans-serif'};
  color: #000;
  line-height: 1;
`;

const Selection = styled.div`
  position: absolute;
  inset: -2px;
  z-index: 2;
  box-sizing: border-box;
  border: 2px solid ${GREEN};
  box-shadow: inset 0 0 0 1px #fff;
`;

const Handle = styled.div`
  position: absolute;
  right: -4px;
  bottom: -4px;
  width: 7px;
  height: 7px;
  background: ${GREEN};
  outline: 1px solid #fff;
`;

const PasteOptions = styled.div`
  position: absolute;
  left: 461px;
  top: 313px;
  z-index: 2;
  box-sizing: border-box;
  width: 30px;
  height: 30px;
  background: #fff;
  border: 1px solid #b5b5b5;
  display: flex;
  justify-content: center;
  align-items: center;
`;

const TabBar = styled.div`
  box-sizing: border-box;
  height: 33px;
  background: #e6e6e6;
  border-top: 1px solid #a8a8a8;
  border-bottom: 1px solid #c8c8c8;
  display: flex;
  align-items: flex-start;
`;

const TabNav = styled.div`
  box-sizing: border-box;
  width: 116px;
  height: 27px;
  margin-top: 3px;
  padding: 0 46px 0 29px;
  border-right: 1px solid #a0a0a0;
  display: flex;
  justify-content: space-between;
  align-items: center;
`;

const SheetTab = styled.div`
  box-sizing: border-box;
  width: ${(p) => (p.$active ? 93 : 92.5)}px;
  height: ${(p) => (p.$active ? 30 : 27)}px;
  margin-top: ${(p) => (p.$active ? 0 : 3)}px;
  padding-bottom: ${(p) => (p.$active ? 4 : 9)}px;
  background: ${(p) => (p.$active ? "#fff" : "transparent")};
  border-bottom: ${(p) => (p.$active ? `2px solid ${GREEN}` : "0")};
  border-right: ${(p) => (p.$active ? "0" : "1px solid #a0a0a0")};
  display: flex;
  justify-content: center;
  align-items: center;
  font-family: "Open Sans", sans-serif;
  font-size: 20px;
  color: ${(p) => (p.$active ? GREEN : "#444")};
  line-height: 1;
`;

const AddSheet = styled.div`
  box-sizing: border-box;
  width: 21px;
  height: 21px;
  margin: 6px 0 0 39px;
  border: 1.5px solid #c8c8c8;
  border-radius: 50%;
  display: flex;
  justify-content: center;
  align-items: center;
  font-family: "Liberation Sans", sans-serif;
  font-size: 20px;
  line-height: 1;
  color: #c0c0c0;
`;

const SplitDots = styled.div`
  margin: 4px 14px 0 auto;
  font-size: 16px;
  color: #555;
`;

const ScrollTrack = styled.div`
  box-sizing: border-box;
  width: 175px;
  height: 24px;
  margin-top: 3px;
  background: #fff;
  border: 1px solid #b0b0b0;
  border-right: 0;
`;

const ScrollArrow = styled.div`
  box-sizing: border-box;
  width: 25px;
  height: 100%;
  border-right: 2px solid #b0b0b0;
  display: flex;
  justify-content: center;
  align-items: center;
`;

const StatusBar = styled.div`
  box-sizing: border-box;
  height: 27px;
  padding: 4px 0 0 11px;
  background: #f3f3f3;
  display: flex;
  align-items: center;
  gap: 27px;
`;

const StatusText = styled.span`
  font-size: 18px;
  color: #444;
`;

const WatermarkBox = styled.svg`
  position: absolute;
  left: 1030px;
  top: 860px;
  pointer-events: none;
`;

const JingyanText = styled.text`
  fill: rgba(255, 255, 255, 0.45);
  stroke: #fff;
  stroke-width: 0.6;
  filter: drop-shadow(0 0 1px rgba(110, 110, 110, 0.6));
`;
